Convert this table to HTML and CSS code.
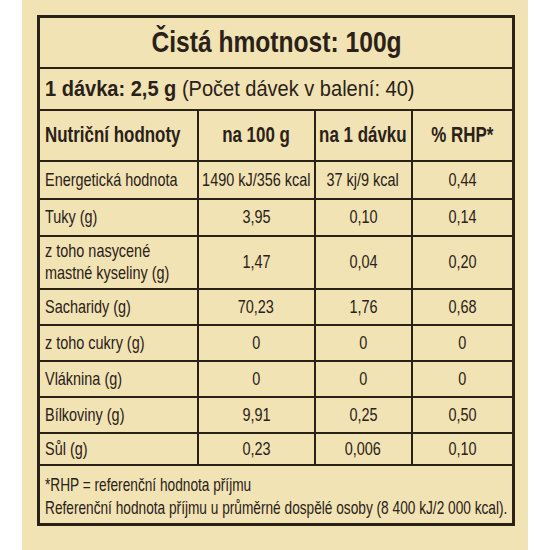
FILE: index.html
```html
<!DOCTYPE html>
<html lang="cs">
<head>
<meta charset="utf-8">
<link rel="stylesheet" href="styles.css">
</head>
<body>
<div class="panel">
  <table class="nt">
    <colgroup>
      <col class="c1"><col class="c2"><col class="c3"><col class="c4">
    </colgroup>
    <tr class="r-title"><td colspan="4" class="title"><span class="t">Čistá hmotnost: 100g</span></td></tr>
    <tr class="r-dose"><td colspan="4" class="dose"><span class="t"><b>1 dávka: 2,5 g</b> (Počet dávek v balení: 40)</span></td></tr>
    <tr class="r-head">
      <th class="lab"><span class="t">Nutriční hodnoty</span></th>
      <th><span class="t">na 100 g</span></th>
      <th><span class="t">na 1 dávku</span></th>
      <th><span class="t">% RHP*</span></th>
    </tr>
    <tr class="r-38"><td class="lab"><span class="t">Energetická hodnota</span></td><td><span class="t">1490 kJ/356 kcal</span></td><td><span class="t">37 kj/9 kcal</span></td><td><span class="t">0,44</span></td></tr>
    <tr class="r-37"><td class="lab"><span class="t">Tuky (g)</span></td><td><span class="t">3,95</span></td><td><span class="t">0,10</span></td><td><span class="t">0,14</span></td></tr>
    <tr class="r-53"><td class="lab two"><span class="t">z toho nasycené<br>mastné kyseliny (g)</span></td><td><span class="t">1,47</span></td><td><span class="t">0,04</span></td><td><span class="t">0,20</span></td></tr>
    <tr class="r-36"><td class="lab"><span class="t">Sacharidy (g)</span></td><td><span class="t">70,23</span></td><td><span class="t">1,76</span></td><td><span class="t">0,68</span></td></tr>
    <tr class="r-36"><td class="lab"><span class="t">z toho cukry (g)</span></td><td><span class="t">0</span></td><td><span class="t">0</span></td><td><span class="t">0</span></td></tr>
    <tr class="r-36"><td class="lab"><span class="t">Vláknina (g)</span></td><td><span class="t">0</span></td><td><span class="t">0</span></td><td><span class="t">0</span></td></tr>
    <tr class="r-36"><td class="lab"><span class="t">Bílkoviny (g)</span></td><td><span class="t">9,91</span></td><td><span class="t">0,25</span></td><td><span class="t">0,50</span></td></tr>
    <tr class="r-32"><td class="lab"><span class="t">Sůl (g)</span></td><td><span class="t">0,23</span></td><td><span class="t">0,006</span></td><td><span class="t">0,10</span></td></tr>
    <tr class="r-foot"><td colspan="4" class="foot"><span class="t">*RHP = referenční hodnota příjmu<br>Referenční hodnota příjmu u průměrné dospělé osoby (8 400 kJ/2 000 kcal).</span></td></tr>
  </table>
</div>
</body>
</html>
```
FILE: styles.css
```css
html, body {
  margin: 0;
  padding: 0;
  background: #ffffff;
}
.panel {
  margin-left: 22px;
  width: 491px;
  height: 535px;
  padding: 15px 0 0 15px;
  background: #f1e3b3;
  overflow: hidden;
}
.nt {
  border-collapse: collapse;
  table-layout: fixed;
  width: 475px;
  border: 3px solid #2a2119;
  color: #2a2119;
  font-family: "Liberation Sans", Arial, sans-serif;
  font-size: 19px;
}
.c1 { width: 159px; }
.c2 { width: 117px; }
.c3 { width: 97px; }
.c4 { width: 102px; }
.nt td, .nt th {
  border: 2px solid #2a2119;
  padding: 0;
  text-align: center;
  vertical-align: middle;
  white-space: nowrap;
  overflow: visible;
}
.t {
  display: inline-block;
  margin: 0 -40px;
  transform: scaleX(0.76);
  transform-origin: center center;
}
.nt .lab { text-align: left; padding-left: 5px; }
.lab .t, .dose .t, .foot .t {
  margin: 0 -200px 0 0;
  transform-origin: left center;
}
.title {
  font-weight: bold;
  font-size: 30px;
}
.title .t { transform: scaleX(0.82); }
.dose {
  text-align: left !important;
  font-size: 22px;
  padding-left: 5px !important;
}
.dose .t { transform: scaleX(0.91); }
.r-head th { font-size: 22px; font-weight: bold; }
.r-head th .t { transform: scaleX(0.77); }
.two .t { line-height: 22px; }
.foot {
  text-align: left !important;
  vertical-align: bottom !important;
  padding: 0 0 4px 5px !important;
}
.foot .t { transform: scaleX(0.72); line-height: 23px; }
.r-title { height: 51px; }
.r-dose { height: 42px; }
.r-head { height: 51px; }
.r-38 { height: 38px; }
.r-37 { height: 37px; }
.r-53 { height: 53px; }
.r-36 { height: 36px; }
.r-32 { height: 32px; }
.r-foot { height: 60px; }
```
